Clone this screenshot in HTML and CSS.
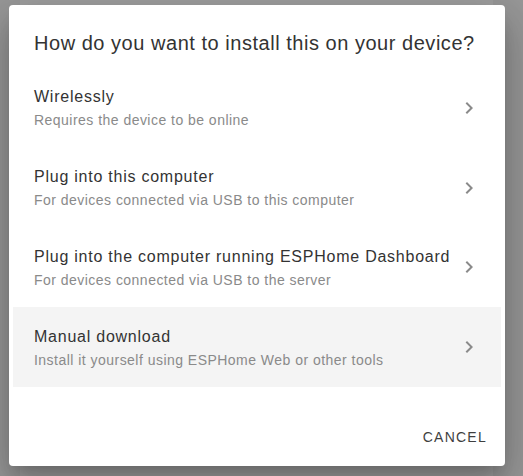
FILE: index.html
```html
<!DOCTYPE html>
<html>
<head>
<meta charset="utf-8">
<link rel="stylesheet" href="styles.css">
</head>
<body>
<div class="page">
  <div class="card"></div>
</div>
<div class="overlay">
  <div class="dialog">
    <h2 class="title">How do you want to install this on your device?</h2>
    <ul class="list">
      <li class="item">
        <div class="text">
          <span class="primary">Wirelessly</span>
          <span class="secondary">Requires the device to be online</span>
        </div>
        <svg class="chev" viewBox="0 0 24 24" width="24" height="24"><path d="M8.59,16.58L13.17,12L8.59,7.41L10,6L16,12L10,18L8.59,16.58Z"/></svg>
      </li>
      <li class="item">
        <div class="text">
          <span class="primary">Plug into this computer</span>
          <span class="secondary">For devices connected via USB to this computer</span>
        </div>
        <svg class="chev" viewBox="0 0 24 24" width="24" height="24"><path d="M8.59,16.58L13.17,12L8.59,7.41L10,6L16,12L10,18L8.59,16.58Z"/></svg>
      </li>
      <li class="item">
        <div class="text">
          <span class="primary">Plug into the computer running ESPHome Dashboard</span>
          <span class="secondary">For devices connected via USB to the server</span>
        </div>
        <svg class="chev" viewBox="0 0 24 24" width="24" height="24"><path d="M8.59,16.58L13.17,12L8.59,7.41L10,6L16,12L10,18L8.59,16.58Z"/></svg>
      </li>
      <li class="item hover">
        <div class="text">
          <span class="primary">Manual download</span>
          <span class="secondary">Install it yourself using ESPHome Web or other tools</span>
        </div>
        <svg class="chev" viewBox="0 0 24 24" width="24" height="24"><path d="M8.59,16.58L13.17,12L8.59,7.41L10,6L16,12L10,18L8.59,16.58Z"/></svg>
      </li>
    </ul>
    <div class="actions">
      <button class="btn">Cancel</button>
    </div>
  </div>
</div>
</body>
</html>
```

FILE: styles.css
```css
* { box-sizing: border-box; }

html, body {
  margin: 0;
  padding: 0;
  width: 523px;
  height: 476px;
  overflow: hidden;
  background: #989898;
  font-family: "Liberation Sans", Arial, sans-serif;
}

.page {
  padding: 0 30px 0 20px;
  height: 476px;
}

.card {
  height: 100%;
  background: #9f9f9f;
}

.overlay {
  position: absolute;
  left: 0;
  top: 0;
  width: 523px;
  height: 476px;
  padding: 5px 0 0 9px;
}

.dialog {
  width: 496px;
  height: 461px;
  background: #ffffff;
  border-radius: 4px;
  display: flex;
  flex-direction: column;
  box-shadow: 0 11px 15px -7px rgba(0,0,0,.2), 0 24px 38px 3px rgba(0,0,0,.14), 0 9px 46px 8px rgba(0,0,0,.12);
}

.title {
  margin: 0;
  padding: 26px 20px 0 25px;
  font-size: 20px;
  line-height: 24px;
  font-weight: normal;
  letter-spacing: 0.53px;
  white-space: nowrap;
  color: #333333;
}

.list {
  list-style: none;
  margin: 13px 4px 0 4px;
  padding: 0;
}

.item {
  height: 79.75px;
  display: flex;
  align-items: center;
  padding: 0 20px 0 21px;
}

.item.hover {
  background: #f4f4f4;
}

.text {
  flex: 1;
  display: flex;
  flex-direction: column;
  padding-top: 2px;
}

.primary {
  font-size: 16px;
  line-height: 20px;
  letter-spacing: 0.76px;
  white-space: nowrap;
  color: #333333;
}

.secondary {
  margin-top: 3px;
  font-size: 14px;
  line-height: 20px;
  letter-spacing: 0.47px;
  white-space: nowrap;
  color: #8a8a8a;
}

.chev {
  flex: none;
  fill: #8a8a8a;
}

.actions {
  margin-top: auto;
  display: flex;
  justify-content: flex-end;
  padding: 8px 10px 11px 8px;
}

.btn {
  height: 36px;
  padding: 0 8px;
  border: none;
  background: transparent;
  font-family: "Liberation Sans", Arial, sans-serif;
  font-size: 14px;
  letter-spacing: 1.25px;
  text-transform: uppercase;
  color: #3f3f3f;
}
```
